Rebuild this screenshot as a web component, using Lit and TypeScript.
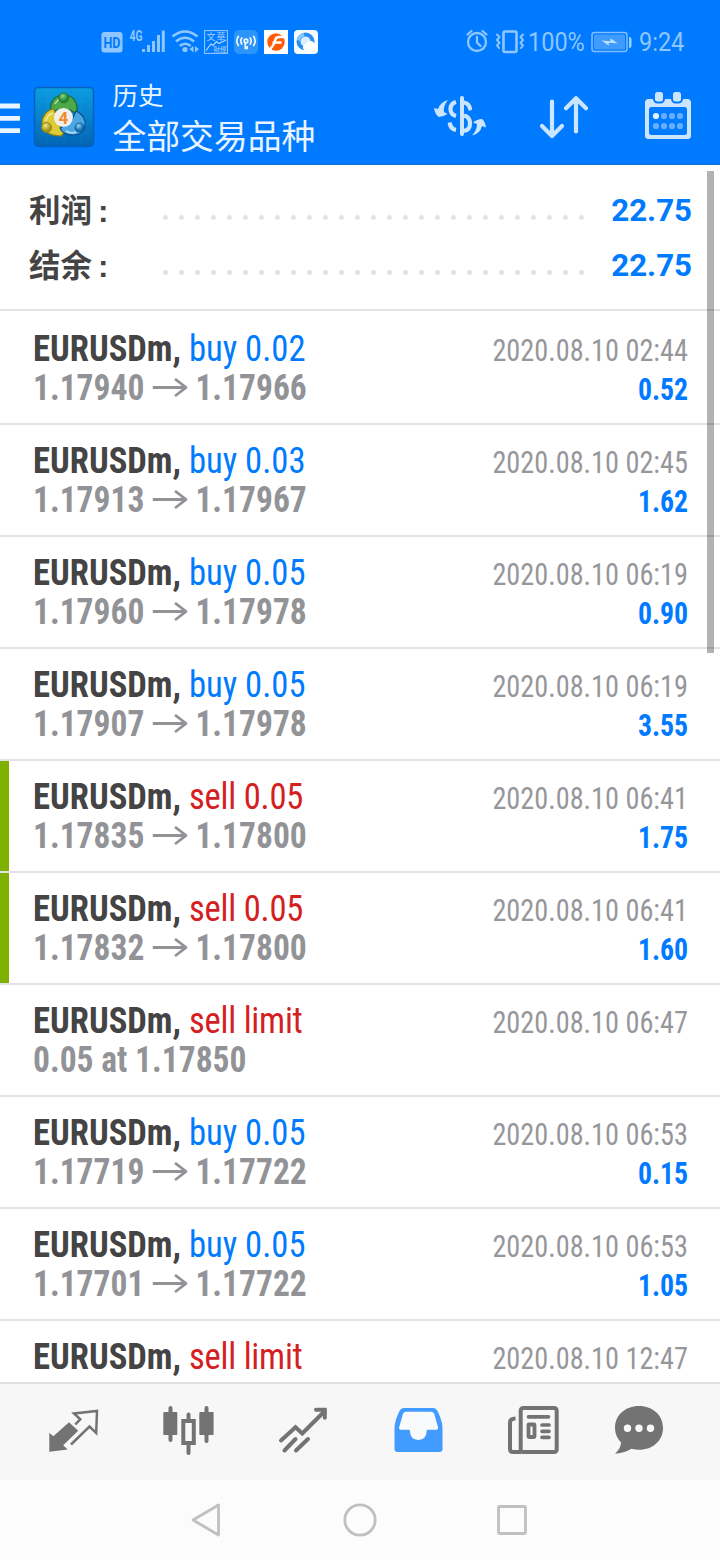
import { LitElement, html, svg, css, nothing } from "lit";
import { customElement, property } from "lit/decorators.js";

interface Deal {
  side: "buy" | "sell";
  label: string;
  from: string;
  to?: string;
  time: string;
  profit?: string;
  marked?: boolean;
}

const deals: Deal[] = [
  { side: "buy", label: "buy 0.02", from: "1.17940", to: "1.17966", time: "2020.08.10 02:44", profit: "0.52" },
  { side: "buy", label: "buy 0.03", from: "1.17913", to: "1.17967", time: "2020.08.10 02:45", profit: "1.62" },
  { side: "buy", label: "buy 0.05", from: "1.17960", to: "1.17978", time: "2020.08.10 06:19", profit: "0.90" },
  { side: "buy", label: "buy 0.05", from: "1.17907", to: "1.17978", time: "2020.08.10 06:19", profit: "3.55" },
  { side: "sell", label: "sell 0.05", from: "1.17835", to: "1.17800", time: "2020.08.10 06:41", profit: "1.75", marked: true },
  { side: "sell", label: "sell 0.05", from: "1.17832", to: "1.17800", time: "2020.08.10 06:41", profit: "1.60", marked: true },
  { side: "sell", label: "sell limit", from: "0.05 at 1.17850", time: "2020.08.10 06:47" },
  { side: "buy", label: "buy 0.05", from: "1.17719", to: "1.17722", time: "2020.08.10 06:53", profit: "0.15" },
  { side: "buy", label: "buy 0.05", from: "1.17701", to: "1.17722", time: "2020.08.10 06:53", profit: "1.05" },
  { side: "sell", label: "sell limit", from: "0.05 at 1.17850", time: "2020.08.10 12:47" },
];

/** An svg cell; x and y are the origin of its drawing coordinates. */
const cell = (x: number, y: number, w: number, h: number, body: unknown) =>
  html`<svg width=${w} height=${h} viewBox="${x} ${y} ${w} ${h}">${body}</svg>`;

@customElement("status-bar")
class StatusBar extends LitElement {
  static styles = css`
    :host { display: flex; height: 80px; padding: 20px 0 0 98px; box-sizing: border-box; color: #8fc6ff;
      font-family: Roboto, "Noto Sans", sans-serif; }
    svg { display: block; flex: none; }
    .right { display: flex; margin-left: 142px; }
    .num { font-size: 25px; line-height: 46px; white-space: nowrap; transform: scaleX(.94); transform-origin: left; }
    .pct { width: 62px; }
  `;
  render() {
    return html`
      ${cell(98, 20, 30, 44, svg`
        <rect x="101.500" y="32" width="21" height="20.500" rx="3" fill="#8fc6ff"/>
        <text x="112" y="47.500" text-anchor="middle" textLength="17" lengthAdjust="spacingAndGlyphs" font-size="14.500" font-weight="700" fill="#007aff">HD</text>`)}
      ${cell(128, 20, 40, 44, svg`
        <text x="129.500" y="40.500" textLength="13" lengthAdjust="spacingAndGlyphs" font-size="14" font-weight="700" fill="#8fc6ff">4G</text>
        <path d="M143.500 52v-3M148.500 52v-7M153.500 52v-11M158.500 52v-17M163.300 52v-21.500" stroke="#8fc6ff" stroke-width="3"/>`)}
      ${cell(168, 20, 34, 44, svg`
        <g fill="none" stroke="#8fc6ff" stroke-width="2.600"><path d="M172.500 36.500q12.500-10 25 0M176 41.500q9-7.500 18 0M179.700 46q5.500-4.500 11 0"/></g>
        <circle cx="185" cy="49.500" r="2.600" fill="#8fc6ff"/><path d="M193.500 46v6.500l-4-3.500zM195 46v6.500l4-3.500z" fill="#8fc6ff"/>`)}
      ${cell(202, 20, 30, 44, svg`
        <rect x="204.600" y="30.600" width="22.800" height="22.800" fill="none" stroke="#8fc6ff" stroke-width="1.100"/>
        <text x="206.500" y="39.500" font-size="9" textLength="19" fill="#a8d3ff" font-family="Noto Sans CJK TC">文華</text>
        <text x="213.500" y="52.300" font-size="6.500" textLength="13" fill="#a8d3ff" font-family="Noto Sans CJK TC">財經</text>
        <path d="M206 50.500l5-6.500 2 1.500 3.500-4 2.500 2 7-3.500" fill="none" stroke="#b8dbff" stroke-width="1.200"/>`)}
      ${cell(232, 20, 30, 44, svg`
        <rect x="234" y="30" width="24" height="24" rx="5" fill="#2b95fa"/>
        <g fill="none" stroke="#f0f8ff" stroke-width="1.700" stroke-linecap="round">
          <circle cx="246" cy="41" r="1.800"/><path d="M245.300 43.500v5h1.900v-2M241.800 38q-2 3 0 6M250.200 38q2 3 0 6M238.300 36.500q-3 4.500 0 9M253.700 36.500q3 4.500 0 9"/></g>`)}
      ${cell(262, 20, 30, 44, svg`
        <rect x="264" y="30" width="24" height="24" fill="#fff"/><circle cx="276" cy="42" r="8.700" fill="#ff5b05"/>
        <path d="M285 37h-6q-3.200 0-4 3.500-1.500 6-6 9.500M281.500 42.500h-9" fill="none" stroke="#fff" stroke-width="2.300"/>`)}
      ${cell(292, 20, 30, 44, svg`
        <rect x="294" y="30" width="24" height="24" rx="4" fill="#f6fbff"/>
        <circle cx="305.500" cy="41.500" r="7" fill="#d9efff" stroke="#2a8df0" stroke-width="4"/>
        <path d="M304 34.500a7.500 7.500 0 0 0-5.500 6" stroke="#80cbff" stroke-width="3" fill="none"/>
        <path d="M305 51a3.800 3.800 0 0 1 .5-7 4.800 4.800 0 0 1 8.500-1q3.500 2.500 2 8z" fill="#fff"/>`)}
      <div class="right">
        ${cell(464, 20, 64, 44, svg`
          <g fill="none" stroke="#8fc6ff" stroke-width="2.300" stroke-linecap="round" stroke-linejoin="round">
            <circle cx="477" cy="42" r="9"/><path d="M477 37v5.500l3.500 3.500M467.500 34.500l4-3.500M486.500 34.500l-4-3.500"/>
            <rect x="503.500" y="31.500" width="13" height="20.500" rx="1.500" stroke-width="2.600"/>
            <path d="M497 34.500l2.500 2.500-2.500 3 2.500 3-2.500 2.500 2 2.500M523 34.500l-2.500 2.500 2.500 3-2.500 3 2.500 2.500-2 2.500" stroke-width="2"/></g>`)}
        <div class="num pct">100%</div>
        ${cell(590, 20, 49, 44, svg`
          <rect x="592" y="32.500" width="35" height="19" rx="2.500" fill="none" stroke="#80beff" stroke-width="1.500"/>
          <rect x="594" y="34.500" width="31" height="15" rx="1" fill="#409bff"/>
          <path d="M629 37q2.500 0 2.500 2v7q0 2-2.500 2z" fill="#9dceff"/>
          <path d="M601.500 40.500l9 .7 0-3 7 5-9-.5.5 3z" fill="#c3e1ff"/>`)}
        <div class="num">9:24</div>
      </div>`;
  }
}

@customElement("title-bar")
class TitleBar extends LitElement {
  static styles = css`
    :host { display: flex; height: 85px; box-sizing: border-box; border-bottom: 1px solid #1269cf; color: #e8f4ff;
      font-family: "Noto Sans CJK SC", sans-serif; }
    svg { display: block; flex: none; }
    .titles { width: 315.500px; display: flex; flex-direction: column; white-space: nowrap; }
    .small { font-size: 25.500px; line-height: 28px; }
    .big { font-size: 33.800px; line-height: 54px; }
  `;
  render() {
    return html`
      ${cell(0, 80, 30, 84, svg`<path d="M0 106h20M0 118.300h20M0 130.600h20" stroke="#e8f5ff" stroke-width="4.800"/>`)}
      ${cell(30, 80, 82.5, 84, svg`
        <defs>
          <linearGradient id="bg" x2="0" y2="1"><stop stop-color="#0c9de0"/><stop offset="1" stop-color="#0264b4"/></linearGradient>
          <radialGradient id="gr" cx=".4" cy=".3"><stop stop-color="#8fd67c"/><stop offset="1" stop-color="#21873b"/></radialGradient>
          <radialGradient id="ye" cx=".4" cy=".3"><stop stop-color="#f3eb7c"/><stop offset="1" stop-color="#a3981c"/></radialGradient>
          <radialGradient id="bl" cx=".4" cy=".3"><stop stop-color="#8fd4f8"/><stop offset="1" stop-color="#1470b4"/></radialGradient>
        </defs>
        <rect x="34.500" y="87.500" width="59" height="59" rx="4" fill="url(#bg)" stroke="#0560bd" stroke-width="1.500"/>
        <path d="M47 88v58M64 88v58M81 88v58M35 101h58M35 117h58M35 133h58" stroke="#39b4ea" stroke-opacity=".12"/>
        <path d="M51 112c-2-11 5-17 13-17s15 6 12.500 19l-6-4h-14z" fill="#4fa848" stroke="#1c6b2c" stroke-width="1.200"/>
        <path d="M54 109c-8 1-12 8-12 14s5 13 19 13l3-3-5-9z" fill="#dccb35" stroke="#8a7d12" stroke-width="1.200"/>
        <path d="M76 111c7 3 10 9 9 15s-5 9-12 9-11-2-13-7l11-6z" fill="#4ba7e2" stroke="#0b4f8d" stroke-width="1.200"/>
        <path d="M55 104q4-7 10-5M46 121q1-6 7-8M66 131q5 3 10 1" stroke="#fff" stroke-opacity=".6" stroke-width="1.500" fill="none"/>
        <circle cx="63.700" cy="98" r="5" fill="url(#gr)" stroke="#1d6e2d" stroke-width=".8"/>
        <circle cx="46.500" cy="127.500" r="5" fill="url(#ye)" stroke="#857a14" stroke-width=".8"/>
        <circle cx="79.500" cy="127.500" r="4.500" fill="url(#bl)" stroke="#0b4f8d" stroke-width=".8"/>
        <circle cx="63.500" cy="117.500" r="9.500" fill="#f1efec"/>
        <text x="63.500" y="123.500" text-anchor="middle" font-family="Roboto, sans-serif" font-weight="700" font-size="17" fill="#f08a2c">4</text>`)}
      <div class="titles"><div class="small">历史</div><div class="big">全部交易品种</div></div>
      ${cell(428, 80, 104, 84, svg`
        <g fill="none" stroke="#cce5ff" stroke-width="4.200">
          <path d="M462 98v36" stroke-linecap="round" stroke-width="4"/>
          <path d="M464 102.500q5 1 6 6" stroke-linecap="round"/>
          <path d="M456 102q-5.500 1.500-5.500 7t5.500 7"/>
          <path d="M464 115.500q6 1.500 6 8t-6 7.500"/>
          <path d="M449.700 122.500q.5 6.500 6.300 7.500"/></g>
        <path d="M448 100q-7.500 2-10 9l-4-1q1 6.500 5 9 5-.5 8.500-3l-3.500-2q-1-6 4-12z" fill="#cce5ff"/>
        <path d="M472 135.500q8-1.500 10-9.500l4 1.500q-1-6.500-4-8.500-5 0-9 3.500l4 1.500q0 6-5 11.500z" fill="#cce5ff"/>`)}
      ${cell(532, 80, 106, 84, svg`<path d="M552 101.500v34M542 126l10 10 10-10M576 131.500v-33M566 108.300l10-10 10 10" fill="none" stroke="#cce5ff" stroke-width="4.200" stroke-linecap="round" stroke-linejoin="round"/>`)}
      ${cell(638, 80, 82, 84, svg`
        <rect x="645" y="99" width="46" height="40" rx="3.500" fill="#cce5ff"/>
        <rect x="649" y="107" width="38" height="28" rx="2.500" fill="#007aff"/>
        <g fill="#cce5ff" stroke="#007aff" stroke-width="2"><rect x="654" y="91" width="10" height="11.500" rx="3.500"/><rect x="672" y="91" width="10" height="11.500" rx="3.500"/></g>
        <circle cx="656" cy="116" r="3.100" fill="#e3f1ff"/>
        <g fill="#66afff">${[[664, 116], [672, 116], [680, 116], [656, 126], [664, 126], [672, 126], [680, 126]].map(([x, y]) => svg`<circle cx=${x} cy=${y} r="3.100"/>`)}</g>`)}`;
  }
}

@customElement("deal-row")
class DealRow extends LitElement {
  @property({ attribute: false }) deal!: Deal;
  static styles = css`
    :host { display: flex; height: 112px; flex: none; box-sizing: border-box; border-bottom: 2px solid #e3e3e4;
      font-family: "Roboto Condensed", Roboto, sans-serif; font-stretch: 75%; white-space: nowrap; }
    .mark { width: 9px; flex: none; }
    .on { background: #7fb200; }
    .body { flex: 1; padding: 16px 32px 0 23.500px; }
    .line { display: flex; justify-content: space-between; align-items: baseline; height: 39px; line-height: 39px; }
    .main { font-size: 37.600px; color: #929397; transform: scaleX(.921); transform-origin: left; }
    .sym { font-weight: 700; color: #444; }
    .price { font-weight: 700; transform: scaleX(.892); }
    .buy { color: #007aff; }
    .sell { color: #d4201f; letter-spacing: -.25px; }
    .side { font-size: 30.500px; color: #96979b; transform: scaleX(.927); transform-origin: right; }
    .profit { font-size: 30.500px; font-weight: 700; color: #007aff; transform: scaleX(.91); transform-origin: right; }
    .arrow { margin: 0 9px; }
  `;
  render() {
    const d = this.deal;
    return html`<div class="mark ${d.marked ? "on" : ""}"></div>
      <div class="body">
        <div class="line">
          <div class="main"><span class="sym">EURUSDm,</span> <span class=${d.side}>${d.label}</span></div>
          <div class="side">${d.time}</div>
        </div>
        <div class="line">
          <div class="main price">${d.from}${d.to
            ? html`<svg class="arrow" width="39.200" height="22" viewBox="0 0 35 22" preserveAspectRatio="none"><path d="M0 9.500H33M22.500 1L33.500 9.500 22.500 18" fill="none" stroke="#929397" stroke-width="2.800"/></svg>${d.to}`
            : nothing}</div>
          ${d.profit ? html`<div class="profit">${d.profit}</div>` : nothing}
        </div>
      </div>`;
  }
}

@customElement("tab-bar")
class TabBar extends LitElement {
  static styles = css`
    :host { display: flex; height: 98px; box-sizing: border-box; border-top: 2px solid #e1e1e2; background: #f7f7f7; }
    svg { display: block; flex: none; }
  `;
  render() {
    return html`
      ${cell(0, 1384, 130, 96, svg`
        <path d="M49.300 1432.700l4 3.500 15.700-14 9.200 8.500-15 14.500 4.500 4.300-18.400 2.300z" fill="#737373"/>
        <path d="M75.300 1424.500l5-5.300-6.300-5.700 23-2.500-.8 22-6.700-6.500-18.500 18" fill="none" stroke="#737373" stroke-width="2.500"/>`)}
      ${cell(130, 1384, 118, 96, svg`
        <g fill="#737373"><rect x="163.300" y="1412" width="14" height="23" rx="1"/><rect x="199.300" y="1412" width="14.300" height="23" rx="1"/></g>
        <rect x="183.300" y="1421" width="10.500" height="22" fill="none" stroke="#737373" stroke-width="4"/>
        <path d="M170.500 1408v32M206.500 1408v33M188.500 1414.500v5M188.500 1444v9" stroke="#737373" stroke-width="4" stroke-linecap="round"/>`)}
      ${cell(248, 1384, 118, 96, svg`
        <g fill="none" stroke="#737373" stroke-width="4"><path d="M281 1440.500l14.500-13.200 6.800 6.200 22.500-22.500" stroke-linecap="round"/><path d="M316 1409.700h8.800v8" stroke-linecap="round"/>
        <path d="M284.500 1450.500l11-11.500M296 1450.500l12-11.500" stroke-linecap="round"/></g>`)}
      ${cell(366, 1384, 114, 96, svg`
        <path d="M404 1408h29q3 0 4.500 3 5 10 5 17v21q0 3-3 3h-42q-3 0-3-3v-21q0-7 5-17 1.500-3 4.500-3z" fill="#429bff"/>
        <path d="M406 1411.700h25q2.300 0 3.200 2l3.700 13q.5 3-1.500 3h-9.600v1q-.6 9.200-8.500 9.200t-8.500-9.200v-1h-9q-2.300 0-1.500-3l3.700-13q.8-2 3-2z" fill="#f9fafb"/>`)}
      ${cell(480, 1384, 116, 96, svg`
        <g fill="none" stroke="#737373" stroke-width="4">
          <rect x="520.700" y="1408" width="36" height="44" rx="2.500"/>
          <path d="M521 1451.900h-8q-3 0-3-3v-26.500q0-4 5.500-4"/>
          <path d="M528.500 1416.800h20M542 1425h7M542 1431.300h7M542 1437.300h7" stroke-linecap="round" stroke-width="3.700"/>
          <rect x="528.500" y="1424.500" width="6" height="12.500" stroke-width="3.800" rx=".5"/></g>`)}
      ${cell(596, 1384, 124, 96, svg`
        <path d="M639 1406c14 0 24 9.500 24 22s-10 21.800-24 21.800q-4 0-7.500-1-8 4.700-16.500 5 6-5.500 6-11.300c-4-4-6-9-6-14.500 0-12.500 10-22 24-22z" fill="#737373"/>
        <g fill="#f9f9f9"><circle cx="627.500" cy="1428.300" r="3.700"/><circle cx="639" cy="1428.300" r="3.700"/><circle cx="650.500" cy="1428.300" r="3.700"/></g>`)}`;
  }
}

@customElement("app-root")
class AppRoot extends LitElement {
  static styles = css`
    :host { display: flex; flex-direction: column; width: 720px; height: 1560px; background: #fff; overflow: hidden; position: relative; }
    .top { background: #007aff; flex: none; }
    .summary { height: 146px; flex: none; box-sizing: border-box; border-bottom: 2px solid #e3e3e4; padding: 18px 28px 0 29px; }
    .sum { display: flex; height: 55px; line-height: 55px; }
    .label { width: 128px; font: 700 31.500px/50px "Noto Sans CJK SC", sans-serif; color: #444; white-space: nowrap; }
    .colon { font-family: "Liberation Sans", sans-serif; margin-left: 6px; }
    .dots { width: 432px; background: radial-gradient(circle at 8.500px 34.500px, #e3e3e3 2px, transparent 3px) 0 0 / 16px 55px; }
    .total { flex: 1; text-align: right; font: 700 32px/55px Roboto, sans-serif; color: #007aff; transform: scaleX(.976); transform-origin: right; }
    .list { flex: 1; min-height: 0; overflow: hidden; display: flex; flex-direction: column; padding-top: 2px; }
    .thumb { position: absolute; left: 706.700px; top: 171px; width: 7px; height: 481.500px; background: rgba(0, 0, 0, .3); }
    .nav { height: 80px; flex: none; background: #fcfcfc; }
    .nav svg { display: block; }
    tab-bar { flex: none; }
  `;
  render() {
    const sum = (name: string) => html`<div class="sum"><div class="label">${name}<span class="colon">:</span></div><div class="dots"></div><div class="total">22.75</div></div>`;
    return html`
      <div class="top"><status-bar></status-bar><title-bar></title-bar></div>
      <div class="summary">${sum("利润")}${sum("结余")}</div>
      <div class="list">${deals.map((d) => html`<deal-row .deal=${d}></deal-row>`)}</div>
      <tab-bar></tab-bar>
      <div class="nav">${cell(0, 1480, 720, 80, svg`
        <g fill="none" stroke="#c0c0c0" stroke-width="2.800" stroke-linejoin="round">
          <path d="M193 1520l25.500-15v30z"/><circle cx="360" cy="1520" r="15.200"/><rect x="498.500" y="1506.500" width="27" height="27" rx="1"/></g>`)}</div>
      <div class="thumb"></div>`;
  }
}
